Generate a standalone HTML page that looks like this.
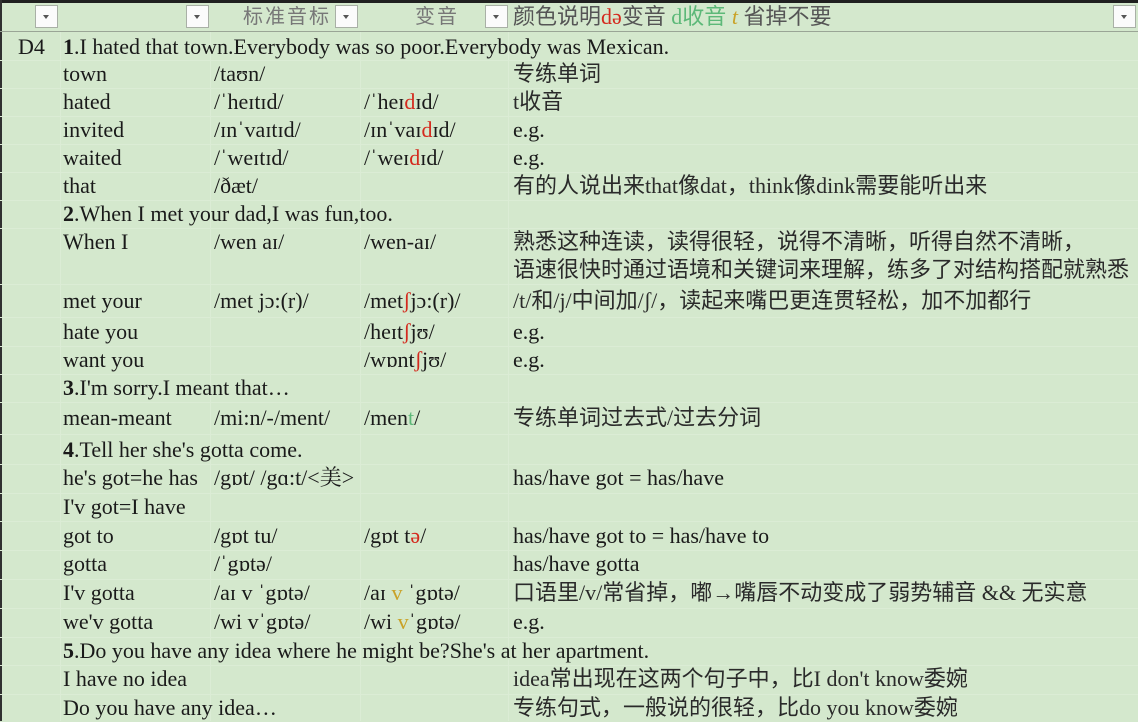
<!DOCTYPE html>
<html><head><meta charset="utf-8"><style>
body{margin:0;width:1138px;height:721px;overflow:hidden;background:#d4e8cd;position:relative;font-family:"Liberation Serif","Noto Serif CJK SC",serif;font-size:22px;color:#1a1a1a;letter-spacing:0}
.t{position:absolute;white-space:nowrap;line-height:28px;height:28px}
.c{font-family:"Liberation Serif","Noto Sans CJK SC",sans-serif;font-size:22px;color:#2a2a2a;letter-spacing:0}
.h{position:absolute;left:0;width:1138px;height:1px;background:#dbecd5}
.v{position:absolute;width:1px;background:#dbecd5;top:32px;height:689px}
.btn{position:absolute;top:5px;width:23px;height:23px;background:#fbfbfb;border:1px solid #a9b0a6;box-sizing:border-box}
.btn:after{content:"";position:absolute;left:7px;top:9px;border-left:3.5px solid transparent;border-right:3.5px solid transparent;border-top:4px solid #555}
.r{color:#d42a1e}.g{color:#5cb878}.y{color:#c9a227}
b{font-weight:bold}
</style></head><body>
<div style="position:absolute;left:0;top:0;width:1138px;height:3px;background:#202020"></div>
<div style="position:absolute;left:0;top:0;width:2px;height:721px;background:#303030"></div>
<div style="position:absolute;left:0;top:31px;width:1138px;height:1px;background:#9aa596"></div>
<div class="btn" style="left:35px"></div>
<div class="btn" style="left:186px"></div>
<div class="btn" style="left:335px"></div>
<div class="btn" style="left:485px"></div>
<div class="btn" style="left:1113px"></div>
<div class="t c" style="left:243px;top:3px;color:#777;font-size:20px;letter-spacing:2px">标准音标</div>
<div class="t c" style="left:415px;top:3px;color:#777;font-size:20px;letter-spacing:2px">变音</div>
<div class="t c" style="left:513px;top:3px;color:#555">颜色说明<span class="r">də</span>变音 <span class="g">d收音</span> <i class="y">t</i> 省掉不要</div>

<div class="v" style="left:60px"></div><div class="v" style="left:210px"></div><div class="v" style="left:360px"></div><div class="v" style="left:508px"></div>
<div class="h" style="top:60px"></div><div class="h" style="top:88px"></div><div class="h" style="top:116px"></div><div class="h" style="top:144px"></div><div class="h" style="top:172px"></div><div class="h" style="top:200px"></div><div class="h" style="top:228px"></div><div class="h" style="top:284px"></div><div class="h" style="top:317px"></div><div class="h" style="top:346px"></div><div class="h" style="top:374px"></div><div class="h" style="top:402px"></div><div class="h" style="top:434px"></div><div class="h" style="top:464px"></div><div class="h" style="top:493px"></div><div class="h" style="top:521px"></div><div class="h" style="top:550px"></div><div class="h" style="top:579px"></div><div class="h" style="top:608px"></div><div class="h" style="top:637px"></div><div class="h" style="top:665px"></div><div class="h" style="top:694px"></div>

<div class="t" style="left:18px;top:33px">D4</div>
<div class="t" style="left:63px;top:33px"><b>1</b>.I hated that town.Everybody was so poor.Everybody was Mexican.</div>

<div class="t" style="left:63px;top:60px">town</div><div class="t" style="left:214px;top:60px">/taʊn/</div><div class="t c" style="left:513px;top:60px">专练单词</div>
<div class="t" style="left:63px;top:88px">hated</div><div class="t" style="left:214px;top:88px">/ˈheɪtɪd/</div><div class="t" style="left:364px;top:88px">/ˈheɪ<span class="r">d</span>ɪd/</div><div class="t c" style="left:513px;top:88px">t收音</div>
<div class="t" style="left:63px;top:116px">invited</div><div class="t" style="left:214px;top:116px">/ɪnˈvaɪtɪd/</div><div class="t" style="left:364px;top:116px">/ɪnˈvaɪ<span class="r">d</span>ɪd/</div><div class="t" style="left:513px;top:116px">e.g.</div>
<div class="t" style="left:63px;top:144px">waited</div><div class="t" style="left:214px;top:144px">/ˈweɪtɪd/</div><div class="t" style="left:364px;top:144px">/ˈweɪ<span class="r">d</span>ɪd/</div><div class="t" style="left:513px;top:144px">e.g.</div>
<div class="t" style="left:63px;top:172px">that</div><div class="t" style="left:214px;top:172px">/ðæt/</div><div class="t c" style="left:513px;top:172px">有的人说出来that像dat，think像dink需要能听出来</div>
<div class="t" style="left:63px;top:200px"><b>2</b>.When I met your dad,I was fun,too.</div>
<div class="t" style="left:63px;top:228px">When I</div><div class="t" style="left:214px;top:228px">/wen aɪ/</div><div class="t" style="left:364px;top:228px">/wen-aɪ/</div><div class="t c" style="left:513px;top:228px">熟悉这种连读，读得很轻，说得不清晰，听得自然不清晰，</div>
<div class="t c" style="left:513px;top:256px">语速很快时通过语境和关键词来理解，练多了对结构搭配就熟悉</div>
<div class="t" style="left:63px;top:287px">met your</div><div class="t" style="left:214px;top:287px">/met jɔ:(r)/</div><div class="t" style="left:364px;top:287px">/met<span class="r">ʃ</span>jɔ:(r)/</div><div class="t c" style="left:513px;top:287px">/t/和/j/中间加/ʃ/，读起来嘴巴更连贯轻松，加不加都行</div>
<div class="t" style="left:63px;top:318px">hate you</div><div class="t" style="left:364px;top:318px">/heɪt<span class="r">ʃ</span>jʊ/</div><div class="t" style="left:513px;top:318px">e.g.</div>
<div class="t" style="left:63px;top:346px">want you</div><div class="t" style="left:364px;top:346px">/wɒnt<span class="r">ʃ</span>jʊ/</div><div class="t" style="left:513px;top:346px">e.g.</div>
<div class="t" style="left:63px;top:374px"><b>3</b>.I'm sorry.I meant that…</div>
<div class="t" style="left:63px;top:404px">mean-meant</div><div class="t" style="left:214px;top:404px">/mi:n/-/ment/</div><div class="t" style="left:364px;top:404px">/men<span class="g">t</span>/</div><div class="t c" style="left:513px;top:404px">专练单词过去式/过去分词</div>
<div class="t" style="left:63px;top:436px"><b>4</b>.Tell her she's gotta come.</div>
<div class="t" style="left:63px;top:464px">he's got=he has</div><div class="t" style="left:214px;top:464px">/gɒt/ /gɑ:t/&lt;美&gt;</div><div class="t" style="left:513px;top:464px">has/have got = has/have</div>
<div class="t" style="left:63px;top:493px">I'v got=I have</div>
<div class="t" style="left:63px;top:522px">got to</div><div class="t" style="left:214px;top:522px">/gɒt tu/</div><div class="t" style="left:364px;top:522px">/gɒt t<span class="r">ə</span>/</div><div class="t" style="left:513px;top:522px">has/have got to = has/have to</div>
<div class="t" style="left:63px;top:550px">gotta</div><div class="t" style="left:214px;top:550px">/ˈgɒtə/</div><div class="t" style="left:513px;top:550px">has/have gotta</div>
<div class="t" style="left:63px;top:579px">I'v gotta</div><div class="t" style="left:214px;top:579px">/aɪ v ˈgɒtə/</div><div class="t" style="left:364px;top:579px">/aɪ <span class="y">v</span> ˈgɒtə/</div><div class="t c" style="left:513px;top:579px">口语里/v/常省掉，嘟→嘴唇不动变成了弱势辅音 &amp;&amp; 无实意</div>
<div class="t" style="left:63px;top:608px">we'v gotta</div><div class="t" style="left:214px;top:608px">/wi vˈgɒtə/</div><div class="t" style="left:364px;top:608px">/wi <span class="y">v</span>ˈgɒtə/</div><div class="t" style="left:513px;top:608px">e.g.</div>
<div class="t" style="left:63px;top:637px"><b>5</b>.Do you have any idea where he might be?She's at her apartment.</div>
<div class="t" style="left:63px;top:665px">I have no idea</div><div class="t c" style="left:513px;top:665px">idea常出现在这两个句子中，比I don't know委婉</div>
<div class="t" style="left:63px;top:694px">Do you have any idea…</div><div class="t c" style="left:513px;top:694px">专练句式，一般说的很轻，比do you know委婉</div>
</body></html>
